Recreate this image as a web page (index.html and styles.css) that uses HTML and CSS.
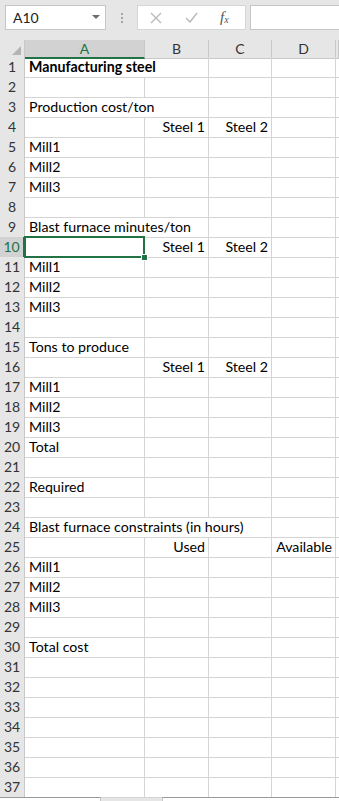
FILE: index.html
```html
<!DOCTYPE html>
<html>
<head>
<meta charset="utf-8">
<link rel="stylesheet" href="styles.css">
</head>
<body>
<div class="fbar">
  <div class="namebox"><span>A10</span><svg class="dd" width="8" height="5" viewBox="0 0 8 5"><path d="M0 0h8L4 4z" fill="#6e6e6e"/></svg></div>
  <div class="dots"><i></i><i></i><i></i></div>
  <div class="btns">
    <svg class="ic-x" width="12" height="12" viewBox="0 0 12 12"><path d="M1 1L11 11M11 1L1 11" stroke="#b8b8b8" stroke-width="1.3" fill="none"/></svg>
    <svg class="ic-ok" width="13" height="11" viewBox="0 0 13 11"><path d="M1 6L5 10L12 1" stroke="#b8b8b8" stroke-width="1.4" fill="none"/></svg>
    <span class="fx">f<sub>x</sub></span>
  </div>
  <div class="finput"></div>
</div>
<div class="sheet">
  <div class="row hdr"><div class="corner"><svg width="9" height="9" viewBox="0 0 9 9"><path d="M9 0V9H0z" fill="#b4b4b4"/></svg></div><div class="ch sel">A</div><div class="ch">B</div><div class="ch">C</div><div class="ch">D</div><div class="ch"></div></div>
  <div class="row"><div class="rh">1</div><div class="c s2 b">Manufacturing steel</div><div class="c"></div><div class="c"></div><div class="c"></div></div>
  <div class="row"><div class="rh">2</div><div class="c"></div><div class="c"></div><div class="c"></div><div class="c"></div><div class="c"></div></div>
  <div class="row"><div class="rh">3</div><div class="c s2">Production cost/ton</div><div class="c"></div><div class="c"></div><div class="c"></div></div>
  <div class="row"><div class="rh">4</div><div class="c"></div><div class="c r">Steel 1</div><div class="c r">Steel 2</div><div class="c"></div><div class="c"></div></div>
  <div class="row"><div class="rh">5</div><div class="c">Mill1</div><div class="c"></div><div class="c"></div><div class="c"></div><div class="c"></div></div>
  <div class="row"><div class="rh">6</div><div class="c">Mill2</div><div class="c"></div><div class="c"></div><div class="c"></div><div class="c"></div></div>
  <div class="row"><div class="rh">7</div><div class="c">Mill3</div><div class="c"></div><div class="c"></div><div class="c"></div><div class="c"></div></div>
  <div class="row"><div class="rh">8</div><div class="c"></div><div class="c"></div><div class="c"></div><div class="c"></div><div class="c"></div></div>
  <div class="row"><div class="rh">9</div><div class="c s2">Blast furnace minutes/ton</div><div class="c"></div><div class="c"></div><div class="c"></div></div>
  <div class="row"><div class="rh sel">10</div><div class="c active"></div><div class="c r">Steel 1</div><div class="c r">Steel 2</div><div class="c"></div><div class="c"></div></div>
  <div class="row"><div class="rh">11</div><div class="c">Mill1</div><div class="c"></div><div class="c"></div><div class="c"></div><div class="c"></div></div>
  <div class="row"><div class="rh">12</div><div class="c">Mill2</div><div class="c"></div><div class="c"></div><div class="c"></div><div class="c"></div></div>
  <div class="row"><div class="rh">13</div><div class="c">Mill3</div><div class="c"></div><div class="c"></div><div class="c"></div><div class="c"></div></div>
  <div class="row"><div class="rh">14</div><div class="c"></div><div class="c"></div><div class="c"></div><div class="c"></div><div class="c"></div></div>
  <div class="row"><div class="rh">15</div><div class="c">Tons to produce</div><div class="c"></div><div class="c"></div><div class="c"></div><div class="c"></div></div>
  <div class="row"><div class="rh">16</div><div class="c"></div><div class="c r">Steel 1</div><div class="c r">Steel 2</div><div class="c"></div><div class="c"></div></div>
  <div class="row"><div class="rh">17</div><div class="c">Mill1</div><div class="c"></div><div class="c"></div><div class="c"></div><div class="c"></div></div>
  <div class="row"><div class="rh">18</div><div class="c">Mill2</div><div class="c"></div><div class="c"></div><div class="c"></div><div class="c"></div></div>
  <div class="row"><div class="rh">19</div><div class="c">Mill3</div><div class="c"></div><div class="c"></div><div class="c"></div><div class="c"></div></div>
  <div class="row"><div class="rh">20</div><div class="c">Total</div><div class="c"></div><div class="c"></div><div class="c"></div><div class="c"></div></div>
  <div class="row"><div class="rh">21</div><div class="c"></div><div class="c"></div><div class="c"></div><div class="c"></div><div class="c"></div></div>
  <div class="row"><div class="rh">22</div><div class="c">Required</div><div class="c"></div><div class="c"></div><div class="c"></div><div class="c"></div></div>
  <div class="row"><div class="rh">23</div><div class="c"></div><div class="c"></div><div class="c"></div><div class="c"></div><div class="c"></div></div>
  <div class="row"><div class="rh">24</div><div class="c s3">Blast furnace constraints (in hours)</div><div class="c"></div><div class="c"></div></div>
  <div class="row"><div class="rh">25</div><div class="c"></div><div class="c r">Used</div><div class="c"></div><div class="c r">Available</div><div class="c"></div></div>
  <div class="row"><div class="rh">26</div><div class="c">Mill1</div><div class="c"></div><div class="c"></div><div class="c"></div><div class="c"></div></div>
  <div class="row"><div class="rh">27</div><div class="c">Mill2</div><div class="c"></div><div class="c"></div><div class="c"></div><div class="c"></div></div>
  <div class="row"><div class="rh">28</div><div class="c">Mill3</div><div class="c"></div><div class="c"></div><div class="c"></div><div class="c"></div></div>
  <div class="row"><div class="rh">29</div><div class="c"></div><div class="c"></div><div class="c"></div><div class="c"></div><div class="c"></div></div>
  <div class="row"><div class="rh">30</div><div class="c">Total cost</div><div class="c"></div><div class="c"></div><div class="c"></div><div class="c"></div></div>
  <div class="row"><div class="rh">31</div><div class="c"></div><div class="c"></div><div class="c"></div><div class="c"></div><div class="c"></div></div>
  <div class="row"><div class="rh">32</div><div class="c"></div><div class="c"></div><div class="c"></div><div class="c"></div><div class="c"></div></div>
  <div class="row"><div class="rh">33</div><div class="c"></div><div class="c"></div><div class="c"></div><div class="c"></div><div class="c"></div></div>
  <div class="row"><div class="rh">34</div><div class="c"></div><div class="c"></div><div class="c"></div><div class="c"></div><div class="c"></div></div>
  <div class="row"><div class="rh">35</div><div class="c"></div><div class="c"></div><div class="c"></div><div class="c"></div><div class="c"></div></div>
  <div class="row"><div class="rh">36</div><div class="c"></div><div class="c"></div><div class="c"></div><div class="c"></div><div class="c"></div></div>
  <div class="row"><div class="rh">37</div><div class="c"></div><div class="c"></div><div class="c"></div><div class="c"></div><div class="c"></div></div>
  <div class="footer"><div class="fb1"></div><div class="fgap"></div><div class="fb2"></div></div>
</div>
</body>
</html>
```
FILE: styles.css
```css
* { box-sizing: border-box; }
html, body { margin: 0; padding: 0; }
body {
  width: 339px;
  height: 801px;
  overflow: hidden;
  background: #e6e6e6;
  font-family: Lato, "Open Sans", sans-serif;
  font-size: 14.2px;
  color: #000;
}
.fbar {
  height: 40px;
  display: flex;
  align-items: flex-start;
  padding: 5px 0 0 5px;
}
.namebox {
  width: 101px;
  height: 25px;
  background: #fff;
  border: 1px solid #c6c6c6;
  display: flex;
  align-items: center;
  justify-content: space-between;
  padding: 0 5px 0 7px;
  font-size: 14px;
  color: #222;
}
.dots {
  width: 31px;
  height: 25px;
  display: flex;
  flex-direction: column;
  align-items: center;
  justify-content: center;
  gap: 2px;
}
.dots i {
  width: 2px;
  height: 2px;
  background: #a6a6a6;
}
.btns {
  width: 109px;
  height: 25px;
  background: #fff;
  border: 1px solid #d6d6d6;
  display: flex;
  align-items: center;
  padding: 0 0 0 12px;
}
.ic-ok { margin-left: 23px; }
.fx {
  margin-left: 22px;
  font-family: "Liberation Serif", serif;
  font-style: italic;
  font-size: 15px;
  color: #555;
}
.fx sub { font-size: 10px; vertical-align: -1px; }
.finput {
  margin-left: 4px;
  flex: 1;
  height: 25px;
  background: #fff;
  border: 1px solid #c6c6c6;
  border-right: none;
}
.sheet { background: #fff; }
.row {
  display: grid;
  grid-template-columns: 25px 120px 64px 63px 64px 1fr;
  height: 20px;
}
.row.hdr { height: 17px; background: #e6e6e6; }
.corner {
  background: #e6e6e6;
  border-right: 1px solid #c8c8c8;
  border-bottom: 1px solid #c8c8c8;
  display: flex;
  align-items: flex-end;
  justify-content: flex-end;
  padding: 0 3px 3px 0;
}
.ch {
  background: #e6e6e6;
  border-right: 1px solid #c8c8c8;
  border-bottom: 1px solid #c8c8c8;
  text-align: center;
  font-size: 14px;
  line-height: 17px;
  color: #333;
}
.ch.sel {
  background: #d2d2d2;
  color: #217346;
  border-bottom: 2px solid #217346;
}
.rh {
  background: #e6e6e6;
  border-right: 1px solid #c8c8c8;
  border-bottom: 1px solid #c8c8c8;
  text-align: center;
  font-size: 14px;
  line-height: 20px;
  color: #333;
}
.rh.sel {
  background: #d2d2d2;
  color: #217346;
  border-right: 2px solid #217346;
}
.c {
  border-right: 1px solid #d4d4d4;
  border-bottom: 1px solid #d4d4d4;
  padding: 0 3px 0 4px;
  line-height: 20px;
  white-space: nowrap;
  overflow: hidden;
}
.c.r { text-align: right; }
.c.b { font-weight: bold; }
.c.s2 { grid-column: span 2; }
.c.s3 { grid-column: span 3; }
.c.active { position: relative; overflow: visible; }
.c.active::before {
  content: "";
  position: absolute;
  left: -1px;
  top: -1px;
  right: -1px;
  bottom: -1px;
  border: 2px solid #217346;
}
.c.active::after {
  content: "";
  position: absolute;
  right: -4px;
  bottom: -4px;
  width: 5px;
  height: 5px;
  background: #217346;
  border: 1px solid #fff;
  box-sizing: content-box;
}
.footer {
  height: 4px;
  display: flex;
  background: #e6e6e6;
}
.fb1 { width: 101px; background: #fff; border-top: 1px solid #9a9a9a; border-right: 1px solid #c6c6c6; }
.fgap { width: 61px; }
.fb2 { flex: 1; background: #fff; border-top: 1px solid #9a9a9a; border-left: 1px solid #c6c6c6; }
```
